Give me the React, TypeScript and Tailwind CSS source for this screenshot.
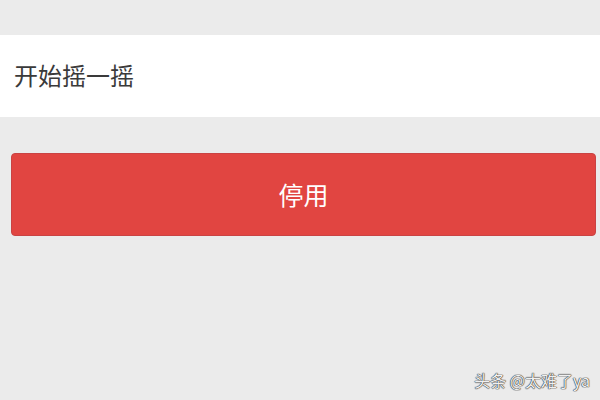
export default function App() {
  return (
    <div
      className="relative w-[600px] h-[400px] bg-[#ebebeb] overflow-hidden"
      style={{ fontFamily: '"Noto Sans CJK SC", "Noto Sans", sans-serif' }}
    >
      <div className="h-[35px]" />
      <div className="h-[82px] bg-white flex items-center pl-[14px]">
        <span className="text-[24px] text-[#3a3a3a] leading-none -mt-[3px]">开始摇一摇</span>
      </div>
      <div className="pt-[36px] pl-[11px] pr-[4px]">
        <div className="h-[83px] rounded-[4px] bg-[#e14541] border border-[#c94343] flex items-center justify-center">
          <span className="text-[25px] text-white leading-none">停用</span>
        </div>
      </div>
      <div className="absolute right-[10px] bottom-[12px] text-[16px] text-[#f0f0f0] leading-none [text-shadow:0_0_1px_#333,0_0_1px_#333,0_0_1px_#333]">
        头条 @太难了ya
      </div>
    </div>
  );
}
